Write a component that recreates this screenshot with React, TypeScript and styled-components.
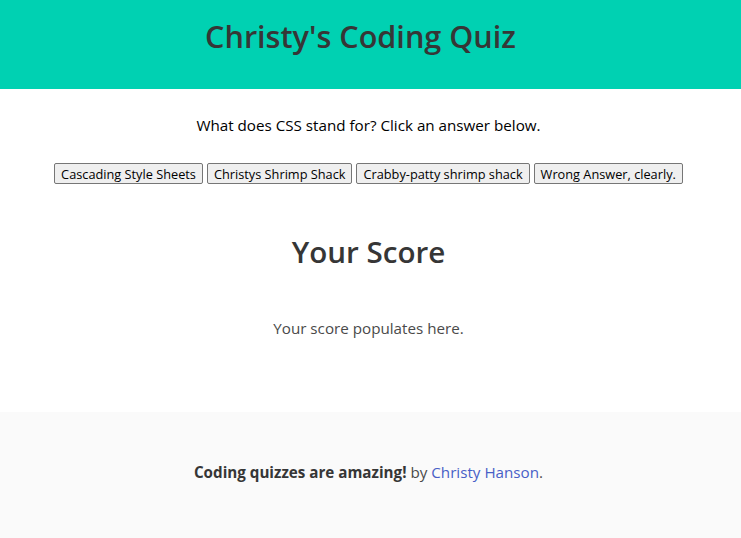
import React from "react";
import styled, { createGlobalStyle } from "styled-components";

const Global = createGlobalStyle`
  html, body { margin: 0; padding: 0; background: #fff; }
  body { font-family: "Open Sans", "Noto Sans", sans-serif; font-size: 15.2px; color: #4a4a4a; }
`;

const Hero = styled.header`
  background: #00d1b2;
  height: 89px;
  box-sizing: border-box;
  display: flex;
  align-items: center;
  justify-content: center;
  padding: 0 20px 16px 0;
`;

const Title = styled.h1`
  margin: 0;
  font-size: 30.6px;
  font-weight: 600;
  color: #363636;
  line-height: 1.125;
`;

const Main = styled.main`
  display: flex;
  flex-direction: column;
  align-items: center;
  height: 323px;
  box-sizing: border-box;
  padding-right: 4px;
`;

const Question = styled.p`
  margin: 27px 0 0;
  color: #000;
  font-size: 15.2px;
  line-height: 18px;
`;

const Answers = styled.div`
  display: flex;
  gap: 4px;
  margin-top: 29px;
`;

const Answer = styled.button`
  font-family: inherit;
  font-size: 12.75px;
  height: 21px;
  padding: 0 6px;
  border: 1px solid #767676;
  border-radius: 2px;
  background: #efefef;
  color: #000;
`;

const Heading = styled.h2`
  margin: 48px 0 0;
  font-size: 29.6px;
  font-weight: 600;
  color: #363636;
  line-height: 40px;
`;

const ScoreText = styled.p`
  margin: 44px 0 0;
  font-size: 15.2px;
  color: #4a4a4a;
  line-height: 24px;
`;

const Footer = styled.footer`
  background: #fafafa;
  height: 126px;
  box-sizing: border-box;
  display: flex;
  justify-content: center;
  align-items: center;
  padding: 0 4px 6px 0;
`;

const FooterText = styled.p`
  margin: 0;
  font-size: 15.2px;
  color: #4a4a4a;
  strong { color: #363636; font-weight: 700; }
  a { color: #485fc7; text-decoration: none; }
`;

export default function App() {
  return (
    <>
      <Global />
      <Hero>
        <Title>Christy's Coding Quiz</Title>
      </Hero>
      <Main>
        <Question>What does CSS stand for? Click an answer below.</Question>
        <Answers>
          <Answer>Cascading Style Sheets</Answer>
          <Answer>Christys Shrimp Shack</Answer>
          <Answer>Crabby-patty shrimp shack</Answer>
          <Answer>Wrong Answer, clearly.</Answer>
        </Answers>
        <Heading>Your Score</Heading>
        <ScoreText>Your score populates here.</ScoreText>
      </Main>
      <Footer>
        <FooterText>
          <strong>Coding quizzes are amazing!</strong> by <a href="#">Christy Hanson</a>.
        </FooterText>
      </Footer>
    </>
  );
}
